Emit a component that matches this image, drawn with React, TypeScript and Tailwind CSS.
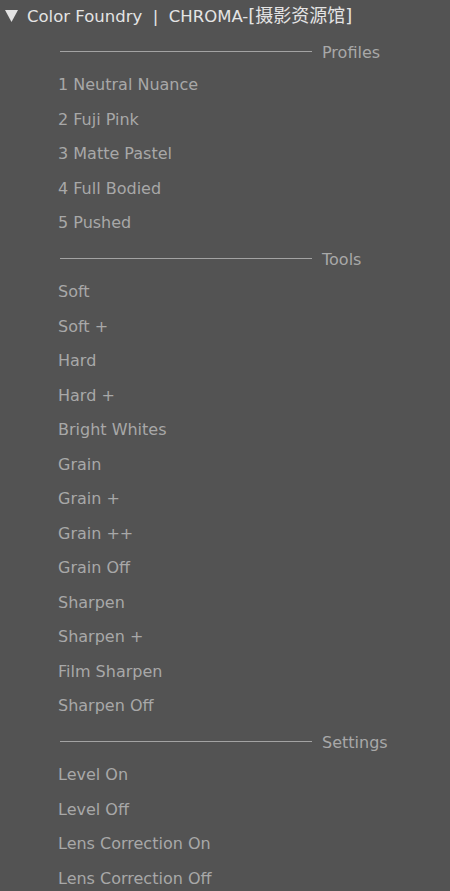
import React from "react";

type Row = { kind: "sep"; label: string } | { kind: "item"; label: string };

const rows: Row[] = [
  { kind: "sep", label: "Profiles" },
  { kind: "item", label: "1 Neutral Nuance" },
  { kind: "item", label: "2 Fuji Pink" },
  { kind: "item", label: "3 Matte Pastel" },
  { kind: "item", label: "4 Full Bodied" },
  { kind: "item", label: "5 Pushed" },
  { kind: "sep", label: "Tools" },
  { kind: "item", label: "Soft" },
  { kind: "item", label: "Soft +" },
  { kind: "item", label: "Hard" },
  { kind: "item", label: "Hard +" },
  { kind: "item", label: "Bright Whites" },
  { kind: "item", label: "Grain" },
  { kind: "item", label: "Grain +" },
  { kind: "item", label: "Grain ++" },
  { kind: "item", label: "Grain Off" },
  { kind: "item", label: "Sharpen" },
  { kind: "item", label: "Sharpen +" },
  { kind: "item", label: "Film Sharpen" },
  { kind: "item", label: "Sharpen Off" },
  { kind: "sep", label: "Settings" },
  { kind: "item", label: "Level On" },
  { kind: "item", label: "Level Off" },
  { kind: "item", label: "Lens Correction On" },
  { kind: "item", label: "Lens Correction Off" },
];

export default function App() {
  return (
    <div
      className="w-[450px] h-[891px] overflow-hidden bg-[#535353]"
      style={{ fontFamily: '"DejaVu Sans", "Noto Sans CJK SC", sans-serif' }}
    >
      <div className="h-[32.25px] pt-[1px] pb-[1px] flex items-center">
        <svg className="ml-[5px] w-[13px] h-[12px]" viewBox="0 0 13 12">
          <polygon points="0,0 13,0 6.5,12" fill="#e4e4e4" />
        </svg>
        <span className="ml-[9px] text-[16.5px] text-[#e4e4e4] whitespace-pre leading-none">
          {"Color Foundry  |  CHROMA-"}
          <span className="text-[18px]">{"[摄影资源馆]"}</span>
        </span>
      </div>
      {rows.map((r, i) =>
        r.kind === "sep" ? (
          <div key={i} className="h-[34.5px] pt-[5px] flex items-center">
            <div className="ml-[60px] w-[252px] h-px bg-[#a3a3a3] -mt-[1px]" />
            <span className="ml-[10px] pt-[2px] text-[16px] text-[#a8a8a8] leading-none">{r.label}</span>
          </div>
        ) : (
          <div key={i} className="h-[34.5px] pt-[2px] flex items-center pl-[58px]">
            <span className="text-[16px] text-[#a8a8a8] leading-none">{r.label}</span>
          </div>
        )
      )}
    </div>
  );
}
